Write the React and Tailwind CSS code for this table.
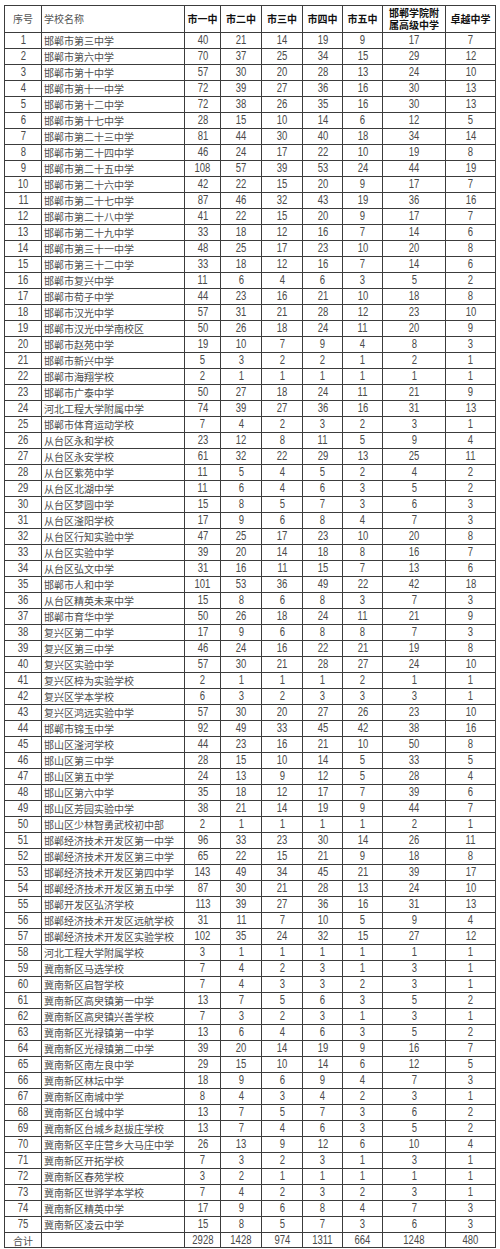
import React from "react";

const rows = [
  [1, "邯郸市第三中学", 40, 21, 14, 19, 9, 17, 7],
  [2, "邯郸市第六中学", 70, 37, 25, 34, 15, 29, 12],
  [3, "邯郸市第十中学", 57, 30, 20, 28, 13, 24, 10],
  [4, "邯郸市第十一中学", 72, 39, 27, 36, 16, 30, 13],
  [5, "邯郸市第十二中学", 72, 38, 26, 35, 16, 30, 13],
  [6, "邯郸市第十七中学", 28, 15, 10, 14, 6, 12, 5],
  [7, "邯郸市第二十三中学", 81, 44, 30, 40, 18, 34, 14],
  [8, "邯郸市第二十四中学", 46, 24, 17, 22, 10, 19, 8],
  [9, "邯郸市第二十五中学", 108, 57, 39, 53, 24, 44, 19],
  [10, "邯郸市第二十六中学", 42, 22, 15, 20, 9, 17, 7],
  [11, "邯郸市第二十七中学", 87, 46, 32, 43, 19, 36, 16],
  [12, "邯郸市第二十八中学", 41, 22, 15, 20, 9, 17, 7],
  [13, "邯郸市第二十九中学", 33, 18, 12, 16, 7, 14, 6],
  [14, "邯郸市第三十一中学", 48, 25, 17, 23, 10, 20, 8],
  [15, "邯郸市第三十二中学", 33, 18, 12, 16, 7, 14, 6],
  [16, "邯郸市复兴中学", 11, 6, 4, 6, 3, 5, 2],
  [17, "邯郸市荀子中学", 44, 23, 16, 21, 10, 18, 8],
  [18, "邯郸市汉光中学", 57, 31, 21, 28, 12, 23, 10],
  [19, "邯郸市汉光中学南校区", 50, 26, 18, 24, 11, 20, 9],
  [20, "邯郸市赵苑中学", 19, 10, 7, 9, 4, 8, 3],
  [21, "邯郸市新兴中学", 5, 3, 2, 2, 1, 2, 1],
  [22, "邯郸市海翔学校", 2, 1, 1, 1, 1, 1, 1],
  [23, "邯郸市广泰中学", 50, 27, 18, 24, 11, 21, 9],
  [24, "河北工程大学附属中学", 74, 39, 27, 36, 16, 31, 13],
  [25, "邯郸市体育运动学校", 7, 4, 2, 3, 2, 3, 1],
  [26, "从台区永和学校", 23, 12, 8, 11, 5, 9, 4],
  [27, "从台区永安学校", 61, 32, 22, 29, 13, 25, 11],
  [28, "从台区紫苑中学", 11, 5, 4, 5, 2, 4, 2],
  [29, "从台区北湖中学", 11, 6, 4, 6, 3, 5, 2],
  [30, "从台区梦圆中学", 15, 8, 5, 7, 3, 6, 3],
  [31, "从台区滏阳学校", 17, 9, 6, 8, 4, 7, 3],
  [32, "从台区行知实验中学", 47, 25, 17, 23, 10, 20, 8],
  [33, "从台区实验中学", 39, 20, 14, 18, 8, 16, 7],
  [34, "从台区弘文中学", 31, 16, 11, 15, 7, 13, 6],
  [35, "邯郸市人和中学", 101, 53, 36, 49, 22, 42, 18],
  [36, "从台区精英未来中学", 15, 8, 6, 8, 3, 7, 3],
  [37, "邯郸市育华中学", 50, 26, 18, 24, 11, 21, 9],
  [38, "复兴区第二中学", 17, 9, 6, 8, 8, 7, 3],
  [39, "复兴区第三中学", 46, 24, 16, 22, 21, 19, 8],
  [40, "复兴区实验中学", 57, 30, 21, 28, 27, 24, 10],
  [41, "复兴区椊为实验学校", 2, 1, 1, 1, 2, 1, 1],
  [42, "复兴区学本学校", 6, 3, 2, 3, 3, 3, 1],
  [43, "复兴区鸿远实验中学", 57, 30, 20, 27, 26, 23, 10],
  [44, "邯郸市锦玉中学", 92, 49, 33, 45, 42, 38, 16],
  [45, "邯山区滏河学校", 44, 23, 16, 21, 10, 50, 8],
  [46, "邯山区第三中学", 28, 15, 10, 14, 5, 33, 5],
  [47, "邯山区第五中学", 24, 13, 9, 12, 5, 28, 4],
  [48, "邯山区第六中学", 35, 18, 12, 17, 7, 39, 6],
  [49, "邯山区芳园实验中学", 38, 21, 14, 19, 9, 44, 7],
  [50, "邯山区少林智勇武校初中部", 2, 1, 1, 1, 1, 2, 1],
  [51, "邯郸经济技术开发区第一中学", 96, 33, 23, 30, 14, 26, 11],
  [52, "邯郸经济技术开发区第三中学", 65, 22, 15, 21, 9, 18, 8],
  [53, "邯郸经济技术开发区第四中学", 143, 49, 34, 45, 21, 39, 17],
  [54, "邯郸经济技术开发区第五中学", 87, 30, 21, 28, 13, 24, 10],
  [55, "邯郸开发区弘济学校", 113, 39, 27, 36, 16, 31, 13],
  [56, "邯郸经济技术开发区远航学校", 31, 11, 7, 10, 5, 9, 4],
  [57, "邯郸经济技术开发区实验学校", 102, 35, 24, 32, 15, 27, 12],
  [58, "河北工程大学附属学校", 3, 1, 1, 1, 1, 1, 1],
  [59, "冀南新区马选学校", 7, 4, 2, 3, 1, 3, 1],
  [60, "冀南新区启智学校", 7, 4, 3, 3, 2, 3, 1],
  [61, "冀南新区高臾镇第一中学", 13, 7, 5, 6, 3, 5, 2],
  [62, "冀南新区高臾镇兴善学校", 7, 3, 2, 3, 1, 3, 1],
  [63, "冀南新区光禄镇第一中学", 13, 6, 4, 6, 3, 5, 2],
  [64, "冀南新区光禄镇第二中学", 39, 20, 14, 19, 9, 16, 7],
  [65, "冀南新区南左良中学", 29, 15, 10, 14, 6, 12, 5],
  [66, "冀南新区林坛中学", 18, 9, 6, 9, 4, 7, 3],
  [67, "冀南新区南城中学", 8, 4, 3, 4, 2, 3, 1],
  [68, "冀南新区台城中学", 13, 7, 5, 7, 3, 6, 2],
  [69, "冀南新区台城乡赵拔庄学校", 13, 7, 4, 6, 3, 5, 2],
  [70, "冀南新区辛庄营乡大马庄中学", 26, 13, 9, 12, 6, 10, 4],
  [71, "冀南新区开拓学校", 7, 3, 2, 3, 1, 3, 1],
  [72, "冀南新区春苑学校", 3, 2, 1, 1, 1, 1, 1],
  [73, "冀南新区世骅学本学校", 7, 4, 2, 3, 2, 3, 1],
  [74, "冀南新区精英中学", 17, 9, 6, 8, 4, 7, 3],
  [75, "冀南新区凌云中学", 15, 8, 5, 7, 3, 6, 3],
];

const totals = [2928, 1428, 974, 1311, 664, 1248, 480];

const td = "border border-[#3c3c3c] p-0 align-middle";

function Num({ v, h = "h-[15px]" }) {
  return (
    <div className={`${h} flex items-center justify-center overflow-hidden`}>
      <span className="block scale-x-[0.76] font-['Liberation_Sans',Arial,sans-serif] text-[12.5px] leading-[15px] text-[#4a4a4a] whitespace-nowrap">
        {v}
      </span>
    </div>
  );
}

function Name({ v, h = "h-[15px]", center = false }) {
  return (
    <div
      className={`${h} flex items-center ${center ? "justify-center" : "justify-start pl-[2px]"} overflow-hidden whitespace-nowrap text-[10px] leading-[15px] text-[#4d4d4d]`}
    >
      {v}
    </div>
  );
}

function Head({ children, bold = true, left = false }) {
  return (
    <th className={`${td} font-normal`}>
      <div
        className={`h-[26px] flex flex-col ${left ? "items-start pl-[2px]" : "items-center text-center"} justify-center overflow-hidden text-[10px] leading-[12px] ${bold ? "font-bold text-[#111]" : "font-normal text-[#555]"}`}
      >
        {children}
      </div>
    </th>
  );
}

export default function App() {
  return (
    <div className="w-[500px] min-h-[1249px] bg-white pt-[5px] pl-[4px] font-['Noto_Sans_CJK_SC',sans-serif] text-[10px] leading-[15px]">
      <table className="table-fixed border-collapse w-[491px]">
        <colgroup>
          <col className="w-[37px]" />
          <col className="w-[143px]" />
          <col className="w-[36px]" />
          <col className="w-[41px]" />
          <col className="w-[41px]" />
          <col className="w-[40px]" />
          <col className="w-[40px]" />
          <col className="w-[63px]" />
          <col className="w-[50px]" />
        </colgroup>
        <thead>
          <tr>
            <Head bold={false}>序号</Head>
            <Head bold={false} left>
              学校名称
            </Head>
            <Head>市一中</Head>
            <Head>市二中</Head>
            <Head>市三中</Head>
            <Head>市四中</Head>
            <Head>市五中</Head>
            <Head>
              <span className="block h-[12px] leading-[12px]">邯郸学院附</span>
              <span className="block h-[12px] leading-[12px]">属高级中学</span>
            </Head>
            <Head>卓越中学</Head>
          </tr>
        </thead>
        <tbody>
          {rows.map((r) => (
            <tr key={r[0]}>
              <td className={td}>
                <Num v={r[0]} />
              </td>
              <td className={td}>
                <Name v={r[1]} />
              </td>
              {r.slice(2).map((v, i) => (
                <td key={i} className={td}>
                  <Num v={v} />
                </td>
              ))}
            </tr>
          ))}
          <tr>
            <td className={td}>
              <Name v="合计" center h="h-[14px]" />
            </td>
            <td className={td}>
              <div className="h-[14px]"></div>
            </td>
            {totals.map((v, i) => (
              <td key={i} className={td}>
                <Num v={v} h="h-[14px]" />
              </td>
            ))}
          </tr>
        </tbody>
      </table>
    </div>
  );
}
